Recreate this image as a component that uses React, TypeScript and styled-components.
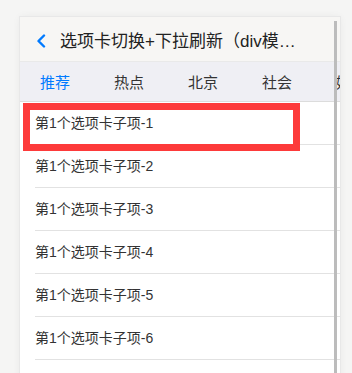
import React from "react";
import styled, { createGlobalStyle } from "styled-components";

const tabs = ["推荐", "热点", "北京", "社会", "娱乐", "科技"];
const items = [1, 2, 3, 4, 5, 6, 7];

const App = () => {
  return (
    <Page>
      <GlobalStyle />
      <Phone>
        <Header>
          <Back>
            <svg width="12" height="14" viewBox="0 0 12 14">
              <path d="M9 1.5 L3.5 7 L9 12.5" fill="none" stroke="#007aff" strokeWidth="2.4" strokeLinecap="round" strokeLinejoin="round" />
            </svg>
          </Back>
          <Title>选项卡切换+下拉刷新（div模式）</Title>
        </Header>
        <TabBar>
          {tabs.map((t, i) => (
            <Tab key={t} active={i === 0}>
              {t}
            </Tab>
          ))}
        </TabBar>
        <List>
          {items.map((n) => (
            <Cell key={n}>第1个选项卡子项-{n}</Cell>
          ))}
        </List>
        <Marker />
        <ScrollThumb />
      </Phone>
    </Page>
  );
};

export default App;

const GlobalStyle = createGlobalStyle`
  html, body {
    margin: 0;
    padding: 0;
    background: #f5f5f4;
    font-family: "Liberation Sans", "Noto Sans CJK SC", sans-serif;
  }
`;

const Page = styled.div`
  width: 352px;
  height: 373px;
  overflow: hidden;
  padding: 17px 0 0 20px;
  box-sizing: border-box;
`;

const Phone = styled.div`
  position: relative;
  width: 320px;
  height: 400px;
  background: #fff;
  box-shadow: 0 0 0 1px #e8e8e8, 0 0 8px rgba(0, 0, 0, 0.06);
  overflow: hidden;
`;

const Header = styled.div`
  height: 44px;
  background: #f7f6f4;
  display: grid;
  grid-template-columns: 40px 1fr 40px;
  align-items: center;
  box-shadow: 0 0 1px rgba(0, 0, 0, 0.5);
`;

const Back = styled.div`
  display: flex;
  padding: 3px 0 0 15px;
`;

const Title = styled.div`
  min-width: 0;
  padding-top: 1px;
  text-align: center;
  font-size: 17px;
  color: #222;
  white-space: nowrap;
  overflow: hidden;
  text-overflow: ellipsis;
`;

const TabBar = styled.div`
  height: 40px;
  margin-top: 1px;
  background: #efeff4;
  border-bottom: 1px solid #dcdcdc;
  box-sizing: border-box;
  display: flex;
  align-items: center;
  padding-left: 20px;
  gap: 44px;
  white-space: nowrap;
`;

const Tab = styled.div<{ active?: boolean }>`
  font-size: 15px;
  flex: none;
  color: ${(p) => (p.active ? "#007aff" : "#333")};
`;

const List = styled.div`
  display: flex;
  flex-direction: column;
  background: #fff;
`;

const Cell = styled.div`
  position: relative;
  height: 43px;
  line-height: 43px;
  padding-left: 15px;
  font-size: 14px;
  color: #333;
  &::after {
    content: "";
    position: absolute;
    left: 15px;
    right: 0;
    bottom: 0;
    height: 1px;
    background: #e2e2e2;
  }
`;

const Marker = styled.div`
  position: absolute;
  left: 3px;
  top: 86px;
  width: 263px;
  height: 34px;
  border: 7px solid #fd3a3a;
`;

const ScrollThumb = styled.div`
  position: absolute;
  right: 3px;
  top: 4px;
  bottom: 0;
  width: 3px;
  background: #bcbcbc;
`;
